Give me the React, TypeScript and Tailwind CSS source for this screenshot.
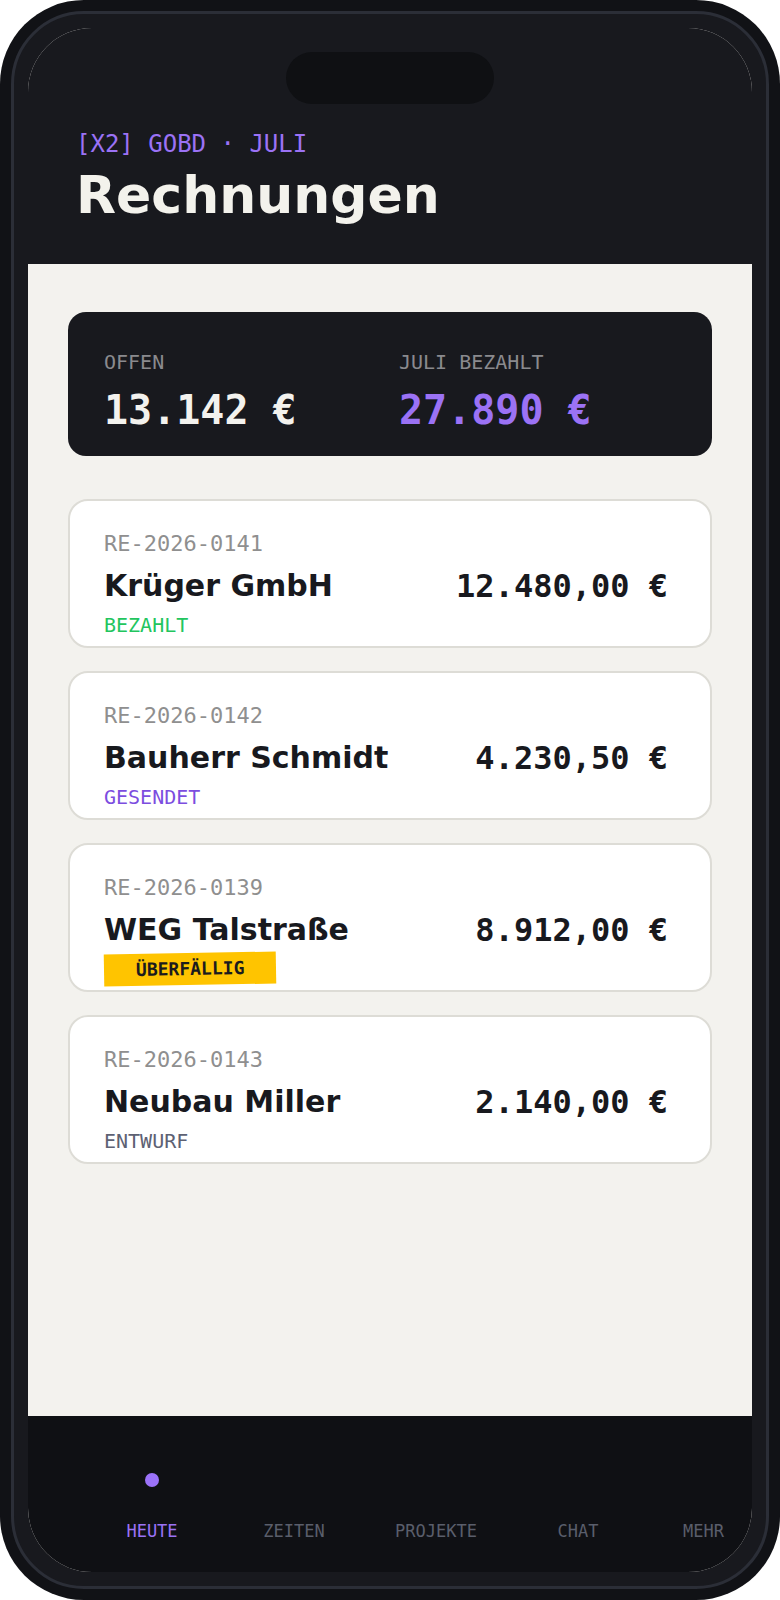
import React from "react";

type Kind = "paid" | "sent" | "overdue" | "draft";

const invoices: { id: string; name: string; amount: string; status: string; kind: Kind }[] = [
  { id: "RE-2026-0141", name: "Krüger GmbH", amount: "12.480,00 €", status: "BEZAHLT", kind: "paid" },
  { id: "RE-2026-0142", name: "Bauherr Schmidt", amount: "4.230,50 €", status: "GESENDET", kind: "sent" },
  { id: "RE-2026-0139", name: "WEG Talstraße", amount: "8.912,00 €", status: "ÜBERFÄLLIG", kind: "overdue" },
  { id: "RE-2026-0143", name: "Neubau Miller", amount: "2.140,00 €", status: "ENTWURF", kind: "draft" },
];

const mono = "font-['DejaVu_Sans_Mono','Liberation_Mono',monospace]";
const sans = "font-['DejaVu_Sans','Liberation_Sans',sans-serif]";

function Status({ kind, label }: { kind: Kind; label: string }) {
  if (kind === "overdue") {
    return (
      <span
        className={`${mono} -rotate-1 bg-[#ffc400] px-[32px] py-[6px] text-[18px] leading-[20px] font-bold text-[#1b1b1e]`}
      >
        {label}
      </span>
    );
  }
  const color =
    kind === "paid" ? "text-[#22c55e]" : kind === "sent" ? "text-[#7c4ddf]" : "text-[#5d6173]";
  return <span className={`${mono} text-[20px] leading-[24px] ${color}`}>{label}</span>;
}

function InvoiceCard({ inv }: { inv: (typeof invoices)[number] }) {
  return (
    <div className="rounded-[20px] border-2 border-[#dddcd6] bg-white pl-[34px] pr-[42px] pt-[29px] pb-[9px]">
      <div className={`${mono} text-[22px] leading-[28px] text-[#8f8f8f]`}>{inv.id}</div>
      <div className="mt-[10px] flex items-center justify-between">
        <span className={`${sans} text-[30px] leading-[36px] font-bold text-[#18191e]`}>{inv.name}</span>
        <span className={`${mono} text-[32px] leading-[36px] font-bold text-[#18191e]`}>{inv.amount}</span>
      </div>
      <div className="mt-[9px] flex h-[24px] items-center">
        <Status kind={inv.kind} label={inv.status} />
      </div>
    </div>
  );
}

const navItems = ["HEUTE", "ZEITEN", "PROJEKTE", "CHAT", "MEHR"];

export default function App() {
  return (
    <div className="h-[1600px] w-[780px] bg-white">
      <div className="h-full w-full rounded-[84px] bg-[#111216] p-[11px]">
        <div className="h-full w-full rounded-[73px] border-[3px] border-[#2b2e37] bg-[#18191e] p-[14px]">
          <div className="flex h-full w-full flex-col overflow-hidden rounded-[64px] bg-[#f3f2ee]">
            {/* Header */}
            <div className="bg-[#18191e] px-[48px] pt-[24px] pb-[39px]">
              <div className="mx-auto h-[52px] w-[208px] rounded-full bg-[#0f1013]" />
              <div className={`${mono} mt-[24px] text-[24px] leading-[32px] text-[#9b72f5]`}>
                [X2] GOBD · JULI
              </div>
              <div className={`${sans} mt-[5px] text-[52px] leading-[60px] font-bold text-[#f3f2ec]`}>
                Rechnungen
              </div>
            </div>

            {/* Content */}
            <div className="flex-1 px-[40px] pt-[48px]">
              <div className="grid grid-cols-2 gap-x-[18px] rounded-[18px] bg-[#18191e] pl-[36px] pr-[36px] pt-[38px] pb-[22px]">
                <div>
                  <div className={`${mono} text-[20px] leading-[24px] text-[#8a8a8e]`}>OFFEN</div>
                  <div className={`${mono} mt-[12px] text-[40px] leading-[48px] font-bold text-[#f3f2ee]`}>
                    13.142 €
                  </div>
                </div>
                <div>
                  <div className={`${mono} text-[20px] leading-[24px] text-[#8a8a8e]`}>JULI BEZAHLT</div>
                  <div className={`${mono} mt-[12px] text-[40px] leading-[48px] font-bold text-[#9b72f5]`}>
                    27.890 €
                  </div>
                </div>
              </div>

              <div className="mt-[43px] flex flex-col gap-[23px]">
                {invoices.map((inv) => (
                  <InvoiceCard key={inv.id} inv={inv} />
                ))}
              </div>
            </div>

            {/* Bottom nav */}
            <div className="grid h-[156px] grid-cols-[142px_142px_142px_142px_1fr] bg-[#0f1014] pl-[53px] pr-[28px] pt-[57px]">
              {navItems.map((label, i) => {
                const active = i === 0;
                const last = i === navItems.length - 1;
                return (
                  <div key={label} className={`flex flex-col ${last ? "items-end" : "items-center"}`}>
                    <div className={`h-[14px] w-[14px] rounded-full ${active ? "bg-[#9b72f9]" : "bg-transparent"}`} />
                    <div
                      className={`${mono} mt-[34px] text-[17px] leading-[20px] ${
                        active ? "text-[#9b72f5]" : "text-[#5a5e6b]"
                      }`}
                    >
                      {label}
                    </div>
                  </div>
                );
              })}
            </div>
          </div>
        </div>
      </div>
    </div>
  );
}
